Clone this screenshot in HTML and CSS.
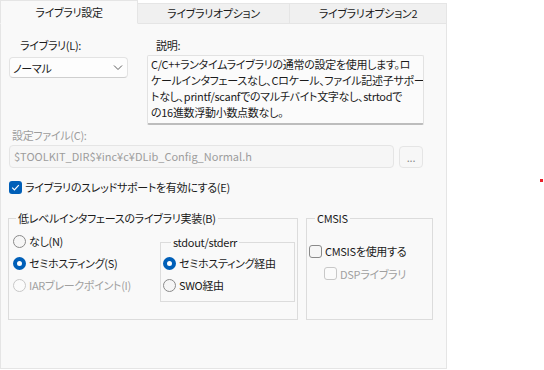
FILE: index.html
```html
<!DOCTYPE html>
<html>
<head>
    <title>ライブラリ設定</title>
    <link rel="stylesheet" href="styles.css">
</head>
<body>
    <div class="dialog">
        <div class="tabs">
            <div class="tab active">ライブラリ設定</div>
            <div class="tab tab-mid">ライブラリオプション</div>
            <div class="tab tab-last">ライブラリオプション2</div>
        </div>
        <div class="panel">
            <div class="top">
                <div class="lib-col">
                    <div class="lib-label">ライブラリ(L):</div>
                    <div class="select">
                        <span>ノーマル</span>
                        <svg class="chevron" width="10" height="6" viewBox="0 0 10 6"><path d="M1 0.5 L5 4.5 L9 0.5" fill="none" stroke="#5c5c5c" stroke-width="1"/></svg>
                    </div>
                </div>
                <div class="desc-col">
                    <div class="desc-label">説明:</div>
                    <div class="desc">C/C++ランタイムライブラリの通常の設定を使用します。ロ<br>ケールインタフェースなし、Cロケール、ファイル記述子サポー<br>トなし、printf/scanfでのマルチバイト文字なし、strtodで<br>の16進数浮動小数点数なし。</div>
                </div>
            </div>

            <div class="config-label">設定ファイル(C):</div>
            <div class="config-row">
                <div class="path">$TOOLKIT_DIR$¥inc¥c¥DLib_Config_Normal.h</div>
                <div class="browse">...</div>
            </div>

            <div class="check-row thread">
                <span class="box checked">
                    <svg width="13" height="13" viewBox="0 0 13 13"><path d="M3.2 6.6 L5.4 8.8 L9.8 4.2" fill="none" stroke="#fff" stroke-width="1.2"/></svg>
                </span>
                ライブラリのスレッドサポートを有効にする(E)
            </div>

            <div class="groups">
                <fieldset class="group low">
                    <legend>低レベルインタフェースのライブラリ実装(B)</legend>
                    <div class="low-body">
                        <div class="radios">
                            <div class="radio-row"><span class="radio"></span>なし(N)</div>
                            <div class="radio-row"><span class="radio on"></span>セミホスティング(S)</div>
                            <div class="radio-row disabled"><span class="radio"></span>IARブレークポイント(I)</div>
                        </div>
                        <fieldset class="group sub">
                            <legend>stdout/stderr</legend>
                            <div class="radio-row"><span class="radio on"></span>セミホスティング経由</div>
                            <div class="radio-row"><span class="radio"></span>SWO経由</div>
                        </fieldset>
                    </div>
                </fieldset>
                <fieldset class="group cmsis">
                    <legend>CMSIS</legend>
                    <div class="check-row cm-row"><span class="box"></span>CMSISを使用する</div>
                    <div class="check-row cm-row dsp disabled"><span class="box"></span>DSPライブラリ</div>
                </fieldset>
            </div>
        </div>
    </div>
    <div class="dot"></div>
</body>
</html>
```

FILE: styles.css
```css
* {
    box-sizing: border-box;
}
body {
    margin: 0;
    background: #fff;
    font-family: "Noto Sans CJK JP", "Noto Sans", sans-serif;
    font-size: 11px;
    letter-spacing: -0.3px;
    font-feature-settings: "palt";
    line-height: 16px;
    color: #1b1b1b;
}
.dialog {
    width: 447px;
}
.tabs {
    display: flex;
    align-items: flex-end;
    height: 24px;
}
.tab {
    height: 21px;
    border: 1px solid #e5e5e5;
    border-left: none;
    background: #f0f0f0;
    text-align: center;
    line-height: 19px;
}
.tab.active {
    width: 138px;
    height: 24px;
    border-left: 1px solid #e5e5e5;
    border-bottom-color: #f9f9f9;
    background: #f9f9f9;
    line-height: 22px;
}
.tab-mid {
    width: 152px;
}
.tab-last {
    width: 157px;
}
.panel {
    height: 345px;
    border: 1px solid #e5e5e5;
    border-top: none;
    background: #f9f9f9;
    padding-top: 13px;
}
.top {
    display: flex;
}
.lib-col {
    margin-left: 8px;
    width: 119px;
}
.lib-label {
    padding-left: 11px;
}
.select {
    margin-top: 4px;
    height: 21px;
    border: 1px solid #e3e3e3;
    border-bottom-color: #cfcfcf;
    border-radius: 4px;
    background: #fdfdfd;
    display: flex;
    align-items: center;
    justify-content: space-between;
    padding: 0 4px 0 3px;
}
.chevron {
    margin-top: 1px;
}
.desc-col {
    margin-left: 19px;
    width: 277px;
}
.desc-label {
    padding-left: 9px;
}
.desc {
    margin-top: 2px;
    height: 70px;
    border: 1px solid #e2e2e2;
    border-bottom: 2px solid #bdbdbd;
    border-radius: 2px;
    background: #fbfbfb;
    padding: 0 3px;
    white-space: nowrap;
    overflow: hidden;
}
.config-label {
    margin-top: 2px;
    padding-left: 11px;
    color: #9d9d9d;
}
.config-row {
    display: flex;
    margin: 2px 0 0 8px;
}
.path {
    width: 385px;
    height: 23px;
    border: 1px solid #e5e5e5;
    border-radius: 4px;
    background: #f6f6f6;
    color: #9d9d9d;
    padding-left: 4px;
    line-height: 21px;
    letter-spacing: 0;
}
.browse {
    margin: 1px 0 0 5px;
    width: 24px;
    height: 22px;
    border: 1px solid #e5e5e5;
    border-radius: 4px;
    background: #f7f7f7;
    color: #8a8a8a;
    text-align: center;
    line-height: 20px;
}
.check-row {
    display: flex;
    align-items: center;
}
.thread {
    margin: 11px 0 0 8px;
    height: 16px;
}
.box {
    width: 13px;
    height: 13px;
    border: 1px solid #8a8a8a;
    border-radius: 3px;
    background: #f6f6f6;
    margin-right: 3px;
    flex: none;
}
.box.checked {
    border: none;
    background: #005fb8;
}
.box svg {
    display: block;
}
.groups {
    display: flex;
    margin: 15px 0 0 7px;
}
.group {
    margin: 0;
    border: 1px solid #dcdcdc;
    padding: 0;
    min-width: 0;
}
.group legend {
    padding: 0 2px;
    line-height: 16px;
}
.low {
    width: 290px;
    padding: 4px 0 17px 0;
}
.low legend {
    margin-left: 7px;
}
.low-body {
    display: flex;
}
.radios {
    width: 151px;
    padding-left: 4px;
}
.radio-row {
    display: flex;
    align-items: center;
    height: 22px;
}
.radio {
    width: 13px;
    height: 13px;
    border: 1px solid #8a8a8a;
    border-radius: 50%;
    background: #f6f6f6;
    margin-right: 3px;
    flex: none;
}
.radio.on {
    border: 4px solid #005fb8;
    background: #fff;
}
.disabled {
    color: #a0a0a0;
}
.disabled .radio, .disabled .box {
    border-color: #c8c8c8;
    background: #fbfbfb;
}
.sub {
    width: 135px;
    margin-top: 4px;
    padding: 2px 0 5px 2px;
}
.sub legend {
    margin-left: 8px;
}
.cmsis {
    width: 127px;
    margin-left: 8px;
    padding: 14px 0 28px 2px;
}
.cmsis legend {
    margin-left: 6px;
}
.cm-row {
    height: 22px;
}
.dsp {
    height: 23px;
    padding-left: 15px;
}
.dot {
    position: absolute;
    left: 540px;
    top: 179px;
    width: 3px;
    height: 3px;
    background: #e8202a;
}
```
